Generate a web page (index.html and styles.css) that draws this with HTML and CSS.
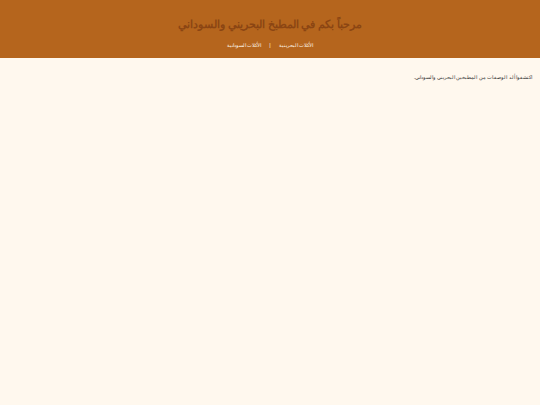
FILE: index.html
```html
<!DOCTYPE html>
<html lang="ar" dir="rtl">
<head>
<meta charset="utf-8">
<link rel="stylesheet" href="styles.css">
</head>
<body>
<header class="site-header">
  <h1 class="title">مرحباً بكم في المطبخ البحريني والسوداني</h1>
  <nav class="nav">
    <a href="#" class="nav-link">الأكلات البحرينية</a>
    <span class="sep">|</span>
    <a href="#" class="nav-link">الأكلات السودانية</a>
  </nav>
</header>
<main class="content">
  <p class="intro">اكتشفوا ألذ الوصفات من المطبخين البحريني والسوداني.</p>
</main>
</body>
</html>
```
FILE: styles.css
```css
html, body {
  margin: 0;
  padding: 0;
  background: #fff8ee;
  font-family: "Liberation Sans", Arial, sans-serif;
}
.site-header {
  background: #b5651d;
  height: 58px;
  box-sizing: border-box;
  padding-top: 17px;
  text-align: center;
}
.title {
  margin: 0;
  font-size: 10.7px;
  font-weight: bold;
  color: #8b4513;
  line-height: 14px;
}
.nav {
  margin-top: 10px;
  font-size: 5.4px;
  line-height: 8px;
  color: #fff8ee;
  display: flex;
  justify-content: center;
  gap: 8px;
}
.nav-link {
  color: #fff8ee;
  text-decoration: none;
}
.content {
  padding: 15px 8px 0;
}
.intro {
  margin: 0;
  font-size: 5.33px;
  line-height: 8px;
  color: #333;
}
```
